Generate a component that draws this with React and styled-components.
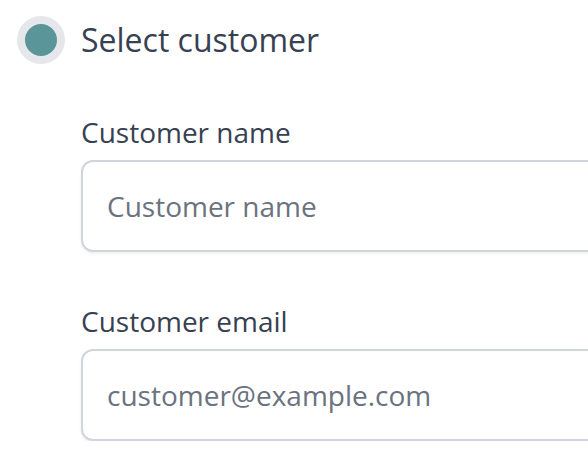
import React from "react";
import styled, { createGlobalStyle } from "styled-components";

const GlobalStyle = createGlobalStyle`
  html, body {
    margin: 0;
    padding: 0;
    background: #ffffff;
    overflow: hidden;
  }

  body {
    font-family: "Open Sans", "Noto Sans", sans-serif;
    color: #374151;
  }
`;

const Page = styled.div`
  padding: 16px 0 0 17px;
  width: 760px;
`;

const StepHeader = styled.div`
  display: flex;
  align-items: center;
  gap: 16px;
`;

const StepDot = styled.span`
  box-sizing: border-box;
  width: 48px;
  height: 48px;
  border-radius: 50%;
  border: 8px solid #e5e7eb;
  background: ${(p) => p.color};
  flex-shrink: 0;
`;

const StepTitle = styled.h2`
  margin: 0;
  font-size: 32px;
  line-height: 48px;
  font-weight: 400;
  color: #374151;
`;

const Fields = styled.div`
  display: flex;
  flex-direction: column;
  gap: 49px;
  margin: 48px 0 0 64px;
`;

const Field = styled.div`
  display: flex;
  flex-direction: column;
`;

const Label = styled.label`
  font-size: 28px;
  line-height: 40px;
  margin-bottom: 8px;
  color: #374151;
`;

const Input = styled.input`
  box-sizing: border-box;
  width: 100%;
  height: 92px;
  padding: 24px 24px;
  font-family: inherit;
  font-size: 28px;
  line-height: 40px;
  color: #111827;
  border: 2px solid #d1d5db;
  border-radius: 12px;
  box-shadow: 0 2px 3px rgba(0, 0, 0, 0.06);
  outline: none;

  &::placeholder {
    color: #6b7280;
  }
`;

export default function App() {
  return (
    <>
      <GlobalStyle />
      <Page>
        <StepHeader>
          <StepDot color="#5a9599" />
          <StepTitle>Select customer</StepTitle>
        </StepHeader>
        <Fields>
          <Field>
            <Label htmlFor="customer-name">Customer name</Label>
            <Input id="customer-name" type="text" placeholder="Customer name" />
          </Field>
          <Field>
            <Label htmlFor="customer-email">Customer email</Label>
            <Input
              id="customer-email"
              type="email"
              placeholder="customer@example.com"
            />
          </Field>
        </Fields>
      </Page>
    </>
  );
}
